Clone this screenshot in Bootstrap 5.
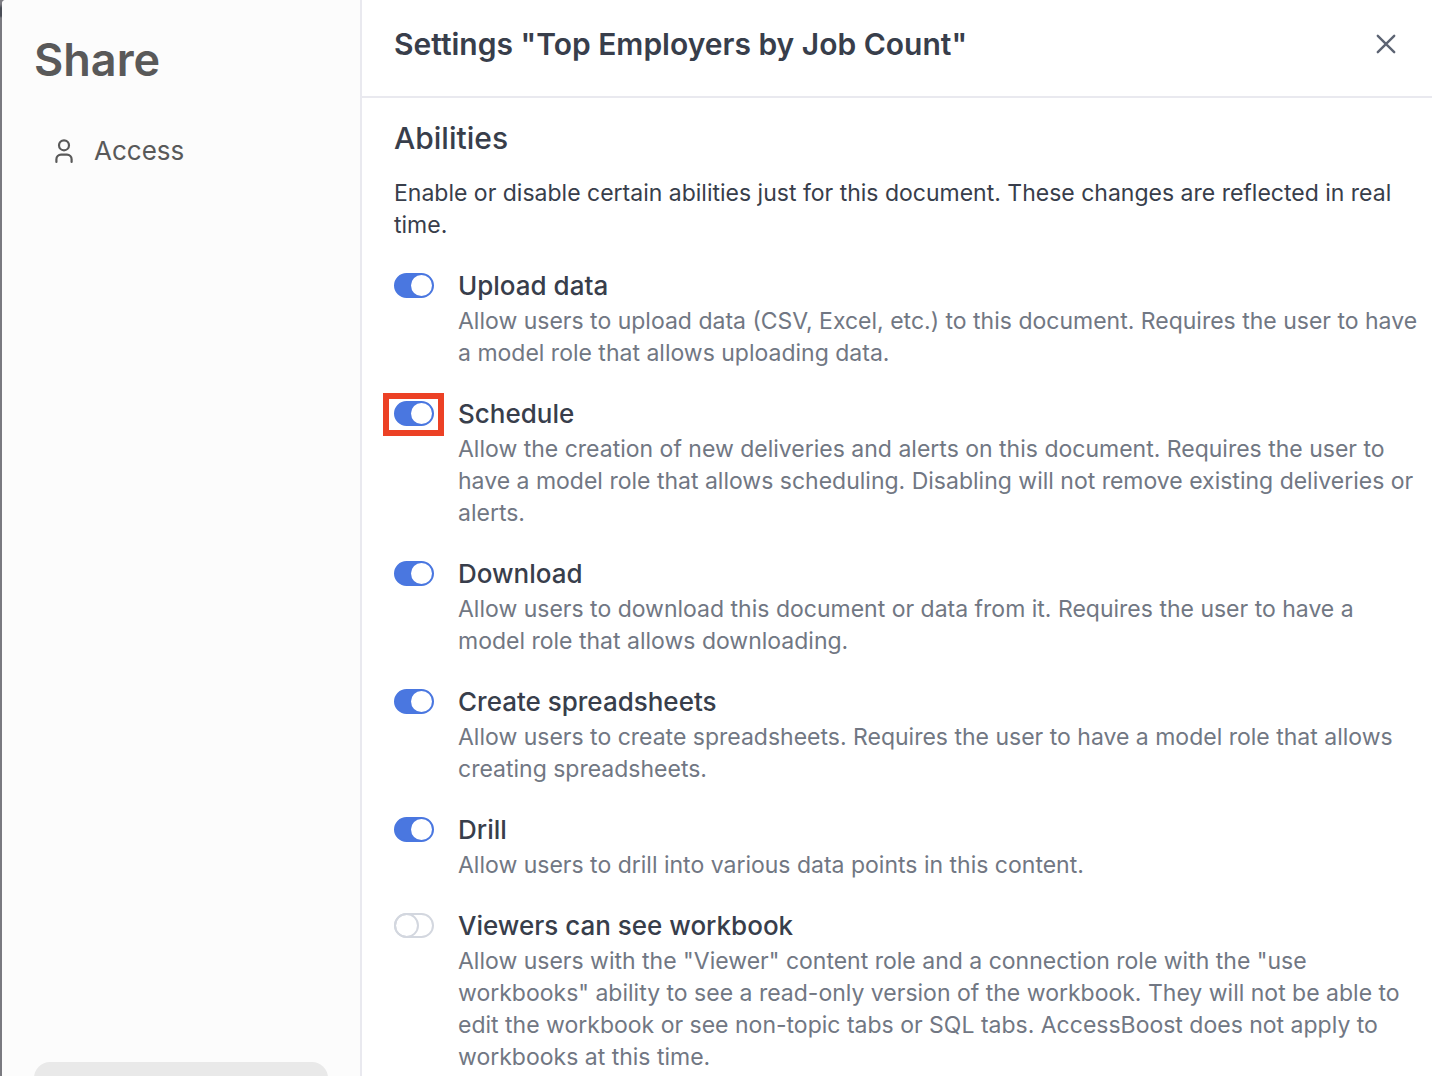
<!DOCTYPE html>
<html lang="en">
<head>
<meta charset="utf-8">
<meta name="viewport" content="width=device-width, initial-scale=1">
<title>Share settings</title>
<link href="https://cdn.jsdelivr.net/npm/bootstrap@5.3.0/dist/css/bootstrap.min.css" rel="stylesheet">
<style>
  body { font-family: Inter, "Liberation Sans", sans-serif; font-size: 23px; line-height: 32px; color: #383e4b; background: linear-gradient(#7d7d83 0, #7d7d83 4px, #4a4e57 8px, #4a4e57 16px, #7a7a80 18px); overflow: hidden; }
  .share-dialog { min-height: calc(100vh + 82px); margin-left: 2px; background: #fff; border-top-left-radius: 4px; overflow: hidden; }
  .share-side { width: 360px; padding: 32px; background: #fcfcfc; border-right: 2px solid #e9e9ef; color: #595959; }
  .share-side h1 { font-size: 45px; line-height: 56px; font-weight: 600; margin: 0 0 45px; }
  .side-link { color: #595959; font-size: 26px; gap: 20px; padding: 2px 20px; }
  .side-block { height: 64px; border-radius: 16px; background: #e9e9e9; }
  .settings-head { height: 98px; padding: 0 32px 8px; border-bottom: 2px solid #e9e9ef; }
  .settings-head h2 { font-size: 30px; line-height: 40px; font-weight: 600; }
  .close-btn { width: 28px; height: 28px; color: #5d6473; }
  .settings-body { padding: 20px 8px 32px 32px; }
  .settings-body h3 { font-size: 30px; line-height: 40px; font-weight: 500; margin-bottom: 19px; }
  .intro-text { margin-bottom: 29px; }
  .ability-list { gap: 29px; }
  .ability { gap: 24px; }
  .ability-label { font-size: 26px; font-weight: 500; margin-bottom: 3px; }
  .ability-text { color: #717783; }
  .switch-box { height: 25px; margin-top: 3px; }
  .toggle { appearance: none; display: block; position: relative; width: 40px; height: 25px; margin: 0; border: 2px solid #d3d7df; border-radius: 13px; background: #fff; cursor: pointer; }
  .toggle::before { content: ""; position: absolute; top: -2px; left: -2px; width: 25px; height: 25px; border: 2px solid #d3d7df; border-radius: 50%; }
  .toggle:checked { background: #4a77e0; border-color: #4a77e0; }
  .toggle:checked::before { top: 0; left: 15px; width: 21px; height: 21px; border: 0; background: #fff; }
  .switch-mark::after { content: ""; position: absolute; inset: -8px -10px -10px -11px; border: 6px solid #ec4125; pointer-events: none; }
</style>
<script src="https://cdn.jsdelivr.net/npm/bootstrap@5.3.0/dist/js/bootstrap.bundle.min.js"></script>
</head>
<body>
<div class="share-dialog d-flex">
  <aside class="share-side d-flex flex-column flex-shrink-0">
    <h1>Share</h1>
    <nav>
      <a class="side-link d-flex align-items-center text-decoration-none" href="#access">
        <svg width="20" height="26" viewBox="0 0 20 26" fill="none" stroke="currentColor" stroke-width="2.2" stroke-linecap="round" aria-hidden="true"><circle cx="10" cy="7.3" r="5"/><path d="M2.4 24v-2.7a4.6 4.6 0 0 1 4.6-4.6h6a4.6 4.6 0 0 1 4.6 4.6v2.7"/></svg>
        <span>Access</span>
      </a>
    </nav>
    <div class="side-block mt-auto"></div>
  </aside>
  <main class="flex-grow-1">
    <header class="settings-head d-flex align-items-center justify-content-between">
      <h2 class="mb-0">Settings "Top Employers by Job Count"</h2>
      <button class="close-btn btn p-0 border-0 d-flex align-items-center justify-content-center" type="button" aria-label="Close">
        <svg width="20" height="20" viewBox="0 0 20 20" fill="none" stroke="currentColor" stroke-width="2.4" stroke-linecap="round" aria-hidden="true"><path d="M1.8 1.8l16.4 16.4M18.2 1.8L1.8 18.2"/></svg>
      </button>
    </header>
    <section class="settings-body">
      <h3>Abilities</h3>
      <p class="intro-text">Enable or disable certain abilities just for this document. These changes are reflected in real time.</p>
      <div class="ability-list d-flex flex-column">
        <div class="ability d-flex">
          <div class="switch-box"><input class="toggle" type="checkbox" role="switch" id="upload" checked></div>
          <div><label class="ability-label d-block" for="upload">Upload data</label>
          <p class="ability-text mb-0">Allow users to upload data (CSV, Excel, etc.) to this document. Requires the user to have a model role that allows uploading data.</p></div>
        </div>
        <div class="ability d-flex">
          <div class="switch-box switch-mark position-relative"><input class="toggle" type="checkbox" role="switch" id="schedule" checked></div>
          <div><label class="ability-label d-block" for="schedule">Schedule</label>
          <p class="ability-text mb-0">Allow the creation of new deliveries and alerts on this document. Requires the user to have a model role that allows scheduling. Disabling will not remove existing deliveries or alerts.</p></div>
        </div>
        <div class="ability d-flex">
          <div class="switch-box"><input class="toggle" type="checkbox" role="switch" id="download" checked></div>
          <div><label class="ability-label d-block" for="download">Download</label>
          <p class="ability-text mb-0">Allow users to download this document or data from it. Requires the user to have a model role that allows downloading.</p></div>
        </div>
        <div class="ability d-flex">
          <div class="switch-box"><input class="toggle" type="checkbox" role="switch" id="sheets" checked></div>
          <div><label class="ability-label d-block" for="sheets">Create spreadsheets</label>
          <p class="ability-text mb-0">Allow users to create spreadsheets. Requires the user to have a model role that allows creating spreadsheets.</p></div>
        </div>
        <div class="ability d-flex">
          <div class="switch-box"><input class="toggle" type="checkbox" role="switch" id="drill" checked></div>
          <div><label class="ability-label d-block" for="drill">Drill</label>
          <p class="ability-text mb-0">Allow users to drill into various data points in this content.</p></div>
        </div>
        <div class="ability d-flex">
          <div class="switch-box"><input class="toggle" type="checkbox" role="switch" id="workbook"></div>
          <div><label class="ability-label d-block" for="workbook">Viewers can see workbook</label>
          <p class="ability-text mb-0">Allow users with the "Viewer" content role and a connection role with the "use workbooks" ability to see a read-only version of the workbook. They will not be able to edit the workbook or see non-topic tabs or SQL tabs. AccessBoost does not apply to workbooks at this time.</p></div>
        </div>
      </div>
    </section>
  </main>
</div>
</body>
</html>
